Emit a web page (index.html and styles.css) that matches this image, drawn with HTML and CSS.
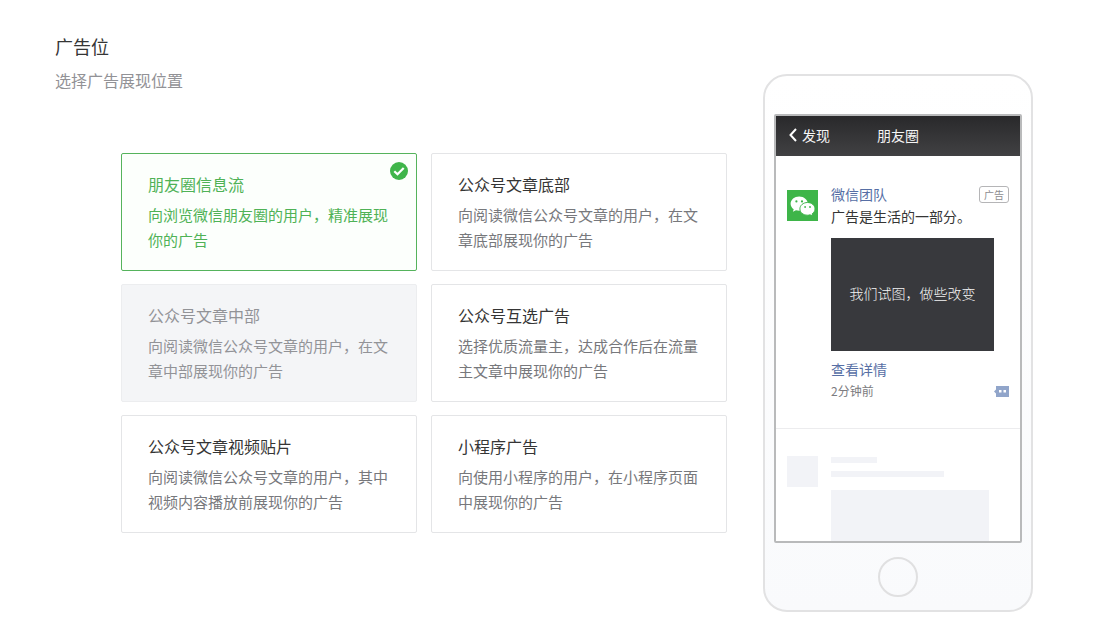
FILE: index.html
```html
<!DOCTYPE html>
<html lang="zh-CN">
<head>
<meta charset="utf-8">
<meta name="viewport" content="width=device-width, initial-scale=1">
<title>广告位</title>
<link rel="stylesheet" href="styles.css">
</head>
<body>
<main class="page">
  <section class="placement">
    <h1 class="placement-title">广告位</h1>
    <p class="placement-hint">选择广告展现位置</p>
    <div class="options" role="radiogroup" aria-label="广告位">
      <label class="option">
        <input class="option-input" type="radio" name="placement" value="moments" checked>
        <span class="option-title">朋友圈信息流</span>
        <span class="option-desc">向浏览微信朋友圈的用户，精准展现你的广告</span>
        <svg class="option-check" viewBox="0 0 18 18" aria-hidden="true"><circle cx="9" cy="9" r="9" fill="#3fb54a"/><path d="M4.300 9.200l3.200 3.100 6.200-6.300" fill="none" stroke="#fff" stroke-width="2.200"/></svg>
      </label>
      <label class="option">
        <input class="option-input" type="radio" name="placement" value="bottom">
        <span class="option-title">公众号文章底部</span>
        <span class="option-desc">向阅读微信公众号文章的用户，在文章底部展现你的广告</span>
      </label>
      <label class="option">
        <input class="option-input" type="radio" name="placement" value="middle" disabled>
        <span class="option-title">公众号文章中部</span>
        <span class="option-desc">向阅读微信公众号文章的用户，在文章中部展现你的广告</span>
      </label>
      <label class="option">
        <input class="option-input" type="radio" name="placement" value="mutual">
        <span class="option-title">公众号互选广告</span>
        <span class="option-desc">选择优质流量主，达成合作后在流量主文章中展现你的广告</span>
      </label>
      <label class="option">
        <input class="option-input" type="radio" name="placement" value="video">
        <span class="option-title">公众号文章视频贴片</span>
        <span class="option-desc">向阅读微信公众号文章的用户，其中视频内容播放前展现你的广告</span>
      </label>
      <label class="option">
        <input class="option-input" type="radio" name="placement" value="mini">
        <span class="option-title">小程序广告</span>
        <span class="option-desc">向使用小程序的用户，在小程序页面中展现你的广告</span>
      </label>
    </div>
  </section>

  <aside class="phone">
    <div class="screen">
      <header class="nav">
        <button class="nav-back" type="button"><svg class="nav-arrow" viewBox="0 0 8 14" aria-hidden="true"><path d="M7 1L1.500 7 7 13" fill="none" stroke="#fff" stroke-width="2"/></svg>发现</button>
        <span class="nav-title">朋友圈</span>
      </header>
      <article class="post">
        <svg class="avatar" viewBox="0 0 31 31" role="img" aria-label="微信">
          <rect width="31" height="31" fill="#3eb549"/>
          <path d="M12.200 6.500C7.400 6.500 3.600 9.700 3.600 13.700c0 2.200 1.200 4.200 3.100 5.500l-.8 2.600 3.100-1.600c1 .3 2.100.5 3.200.5 4.800 0 8.600-3.100 8.600-7S17 6.500 12.200 6.500z" fill="#fff"/>
          <path d="M20.500 12.500c-4.300 0-7.600 2.900-7.600 6.400s3.300 6.300 7.600 6.300c.9 0 1.800-.1 2.600-.4l2.700 1.500-.7-2.400c1.800-1.200 2.900-3 2.900-5 0-3.500-3.300-6.400-7.500-6.400z" fill="#fff" stroke="#3eb549"/>
          <g fill="#3eb549"><circle cx="9.400" cy="11.400" r="1.100"/><circle cx="15" cy="11.400" r="1.100"/><circle cx="18.100" cy="17" r=".9"/><circle cx="23" cy="17" r=".9"/></g>
        </svg>
        <div class="post-body">
          <div class="post-head"><span class="post-name">微信团队</span><span class="post-tag">广告</span></div>
          <p class="post-text">广告是生活的一部分。</p>
          <div class="post-picture">我们试图，做些改变</div>
          <a class="post-link" href="#">查看详情</a>
          <div class="post-foot">
            <span class="post-time">2分钟前</span>
            <button class="post-comment" type="button" aria-label="评论"><svg class="comment-icon" viewBox="0 0 15 11"><path d="M2 0h13v11H2V7.500L0 5.500l2-2z" fill="#91a5ca"/><path d="M5 4h2.500v2.500H5zM9.500 4H12v2.500H9.500z" fill="#fff"/></svg></button>
          </div>
        </div>
      </article>
      <div class="skeleton" aria-hidden="true">
        <div class="skeleton-avatar"></div>
        <div class="skeleton-body">
          <div class="skeleton-name"></div>
          <div class="skeleton-line"></div>
          <div class="skeleton-picture"></div>
        </div>
      </div>
    </div>
    <div class="home"></div>
  </aside>
</main>
</body>
</html>
```
FILE: styles.css
```css
* { box-sizing: border-box; }

body {
  margin: 0;
  background: #fff;
  color: #353535;
  font-family: "Noto Sans CJK SC", sans-serif;
}

button {
  padding: 0;
  border: 0;
  background: none;
  font: inherit;
  cursor: pointer;
}

.page {
  display: flex;
  align-items: flex-start;
  gap: 36px;
  padding: 31px 64px 24px 55px;
}

.placement { flex: 1; min-width: 0; }

.placement-title {
  margin: 0;
  font-size: 18px;
  font-weight: 400;
  line-height: 30px;
}

.placement-hint {
  margin: 7px 0 0;
  color: #929296;
  font-size: 16px;
  line-height: 24px;
}

.options {
  display: grid;
  grid-template-columns: 1fr 1fr;
  gap: 13px 14px;
  margin: 61px 0 0 66px;
}

.option {
  position: relative;
  display: flex;
  flex-direction: column;
  gap: 6px;
  padding: 18px 26px;
  border: 1px solid #e4e5e7;
  border-radius: 2px;
  cursor: pointer;
}

.option-input {
  position: absolute;
  inset: 0;
  width: 100%;
  height: 100%;
  margin: 0;
  opacity: 0;
  cursor: inherit;
}

.option-title { font-size: 16px; line-height: 24px; }

.option-desc {
  color: #77787c;
  font-size: 15px;
  line-height: 25px;
}

.option-check {
  position: absolute;
  top: 8px;
  right: 8px;
  width: 18px;
  height: 18px;
}

.option:has(:checked) {
  border-color: #55b35c;
  background: #fcfffc;
}

.option:has(:checked) .option-title,
.option:has(:checked) .option-desc { color: #4fb256; }

.option:has(:disabled) {
  border-color: #ecedef;
  background: #f4f5f7;
  cursor: not-allowed;
}

.option:has(:disabled) .option-title,
.option:has(:disabled) .option-desc { color: #929397; }

.phone {
  flex: none;
  width: 270px;
  margin-top: 43px;
  padding: 38px 9px 13px;
  border: 2px solid #e2e2e3;
  border-radius: 24px;
  background: linear-gradient(#fff, #f9fafc);
}

.screen {
  border: 2px solid #b9babb;
  border-radius: 2px;
  background: #fff;
}

.nav {
  display: grid;
  grid-template-columns: 1fr auto 1fr;
  align-items: center;
  height: 40px;
  padding: 0 13px 2px;
  background: linear-gradient(#29292b, #414143);
  color: #f4f4f4;
  font-size: 14px;
}

.nav-back {
  display: flex;
  align-items: center;
  gap: 5px;
  color: inherit;
}

.nav-arrow { width: 8px; height: 14px; }

.post {
  display: flex;
  gap: 13px;
  padding: 27px 11px 26px;
  border-bottom: 1px solid #ececee;
}

.avatar {
  flex: none;
  width: 31px;
  height: 31px;
  margin-top: 7px;
}

.post-body { flex: 1; font-size: 14px; line-height: 22px; }

.post-head,
.post-foot {
  display: flex;
  align-items: center;
  justify-content: space-between;
}

.post-name,
.post-link { color: #576fa5; }

.post-tag {
  padding: 0 4px;
  border: 1px solid #b5b5b7;
  border-radius: 3px;
  color: #8d8d90;
  font-size: 10px;
  line-height: 15px;
}

.post-text { margin: 0; }

.post-picture {
  display: flex;
  align-items: center;
  justify-content: center;
  width: 163px;
  height: 113px;
  margin: 11px 0 7px;
  padding-bottom: 4px;
  background: #38393d;
  color: #f4f4f4;
  font-family: KaiTi, STKaiti, "Noto Sans CJK SC", sans-serif;
  font-size: 14px;
  font-weight: 300;
}

.post-link { display: block; text-decoration: none; }

.post-time { color: #7c7c80; font-size: 12px; }

.post-comment { display: flex; }

.comment-icon { width: 15px; height: 11px; }

.skeleton {
  display: flex;
  gap: 13px;
  padding: 27px 11px 0;
}

.skeleton-avatar { width: 31px; height: 31px; background: #f2f3f7; }

.skeleton-body { flex: 1; padding-top: 1px; }

.skeleton-name,
.skeleton-line { height: 6px; background: #f2f3f7; }

.skeleton-name { width: 46px; }

.skeleton-line { width: 113px; margin: 8px 0 13px; }

.skeleton-picture { width: 158px; height: 51px; background: #f2f3f7; }

.home {
  width: 40px;
  height: 40px;
  margin: 14px auto 0;
  border: 2px solid #e0e0e1;
  border-radius: 50%;
}
```
